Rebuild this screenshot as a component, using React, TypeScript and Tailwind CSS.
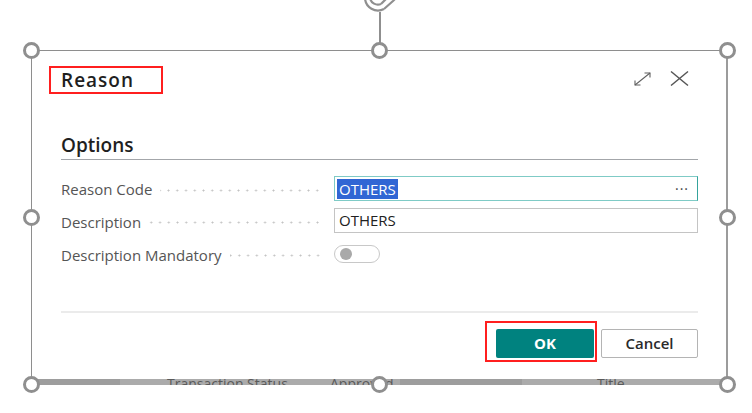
import React from "react";

const handles: [number, number][] = [
  [23, 42], [371, 42], [719, 42],
  [23, 209], [719, 209],
  [23, 376], [371, 376], [719, 376],
];

function Dots() {
  return (
    <div className="flex-1 ml-[8px] mt-[3px] h-[3px] bg-[radial-gradient(circle,#c2c2c2_0.85px,transparent_1.15px)] bg-[length:8.75px_3px] bg-right bg-repeat-x" />
  );
}

export default function App() {
  return (
    <div className="relative w-[752px] h-[413px] bg-white overflow-hidden font-['Open_Sans','Noto_Sans',sans-serif]">
      {/* rotation handle */}
      <svg className="absolute left-[360px] top-0" width="44" height="16" viewBox="0 0 44 16">
        <path d="M5 -2 A13 13 0 0 0 24 9" fill="none" stroke="#8f8f8f" strokeWidth="2.2" />
        <path d="M10 -2 A8 8 0 0 0 21 4" fill="none" stroke="#8f8f8f" strokeWidth="2.2" />
        <path d="M24 9 L33 1 L38 -4" fill="none" stroke="#8f8f8f" strokeWidth="2.2" />
        <path d="M21 4 L28 -3" fill="none" stroke="#8f8f8f" strokeWidth="2.2" />
      </svg>
      <div className="absolute left-[379px] top-[12px] w-[1.5px] h-[31px] bg-[#8f8f8f]" />

      <div className="pt-[50px] pl-[31px]">
        <div className="w-[697px] h-[335px] border-l border-t border-r-2 border-l-[#8e8e8e] border-t-[#8e8e8e] border-r-[#9c9c9c] flex flex-col">
          {/* header */}
          <div className="flex items-start pt-[15px]">
            <div className="ml-[17px] w-[114px] h-[28px] border-2 border-[#ff1f1f] flex items-center pl-[10px]">
              <span className="text-[19px] leading-[24px] font-semibold tracking-[1px] text-[#1f1f1f]">Reason</span>
            </div>
            <div className="ml-auto mr-[37px] mt-[5px] flex items-center gap-[19px]">
              <svg width="17" height="14" viewBox="0 0 17 14" fill="none" stroke="#5f5f5f" strokeWidth="1.1">
                <path d="M1 13 L16 1" />
                <path d="M10.5 1 H16 V5.5" />
                <path d="M1 8.5 V13 H6.5" />
              </svg>
              <svg width="19" height="15" viewBox="0 0 19 15" fill="none" stroke="#555" strokeWidth="1.4">
                <path d="M1 0.5 L18 14.5" />
                <path d="M18 0.5 L1 14.5" />
              </svg>
            </div>
          </div>

          {/* content */}
          <div className="pl-[29px] pr-[28px] flex flex-col">
            <div className="mt-[39px] text-[19px] leading-[24px] font-semibold text-[#1f1f1f] pb-[2px] border-b border-[#a3a6aa]">
              Options
            </div>

            <div className="mt-[16px] h-[25px] flex">
              <div className="w-[273px] flex items-center pr-[12px]">
                <span className="mt-[2px] text-[15px] text-[#555]">Reason Code</span>
                <Dots />
              </div>
              <div className="flex-1 h-[25px] border border-[#7fcbc6] border-r-[#35a39c] flex items-center pl-[2px] pr-[8px]">
                <span className="text-[15px] leading-[20px] bg-[#3166d4] text-white px-[2px]">OTHERS</span>
                <span className="ml-auto text-[14px] text-[#444] tracking-[1px]">···</span>
              </div>
            </div>

            <div className="mt-[7px] h-[25px] flex">
              <div className="w-[273px] flex items-center pr-[12px]">
                <span className="mt-[3px] text-[15px] text-[#555]">Description</span>
                <Dots />
              </div>
              <div className="flex-1 h-[25px] border border-[#c4c4c4] flex items-center px-[4px]">
                <span className="text-[15px] text-[#212121]">OTHERS</span>
              </div>
            </div>

            <div className="mt-[8px] h-[25px] flex">
              <div className="w-[273px] flex items-center pr-[12px]">
                <span className="mt-[4px] text-[15px] text-[#555]">Description Mandatory</span>
                <Dots />
              </div>
              <div className="flex-1 flex items-center">
                <div className="w-[46px] h-[18px] mt-[1px] rounded-full border border-[#c8c8c8] flex items-center pl-[5px]">
                  <div className="w-[12px] h-[12px] rounded-full bg-[#a9a9a9]" />
                </div>
              </div>
            </div>

            <div className="mt-[45px] h-[2px] bg-[#ebebeb]" />

            <div className="mt-[16px] flex justify-end gap-[7px]">
              <div className="relative">
                <div className="absolute -left-[11px] -top-[8px] -right-[3px] -bottom-[4px] border-2 border-[#ff1f1f]" />
                <button className="w-[98px] h-[29px] rounded-[2px] bg-[#00827f] text-white text-[15px] font-bold flex items-center justify-center">
                  OK
                </button>
              </div>
              <button className="w-[97px] h-[29px] rounded-[2px] border border-[#b4b4b4] bg-white text-[#2a2a2a] text-[15px] font-semibold flex items-center justify-center">
                Cancel
              </button>
            </div>
          </div>

          <div className="flex-1" />

          {/* bottom strip */}
          <div className="relative h-[6px] overflow-hidden bg-[linear-gradient(to_right,#9d9d9d_0px,#9d9d9d_88px,#ababab_88px,#ababab_368px,#9d9d9d_368px,#9d9d9d_490px,#ababab_490px)]">
            <span className="absolute left-[135px] -top-[2px] text-[14px] leading-[14px] text-[#5a5a5a] whitespace-nowrap">Transaction Status</span>
            <span className="absolute left-[298px] -top-[2px] text-[14px] leading-[14px] text-[#5a5a5a] whitespace-nowrap">Approved</span>
            <span className="absolute left-[565px] -top-[2px] text-[14px] leading-[14px] text-[#5a5a5a] whitespace-nowrap">Title</span>
          </div>
        </div>
      </div>

      {handles.map(([l, t], i) => (
        <div
          key={i}
          className="absolute w-[17px] h-[17px] rounded-full border-[3px] border-[#8f8f8f] bg-white"
          style={{ left: l, top: t }}
        />
      ))}
    </div>
  );
}
